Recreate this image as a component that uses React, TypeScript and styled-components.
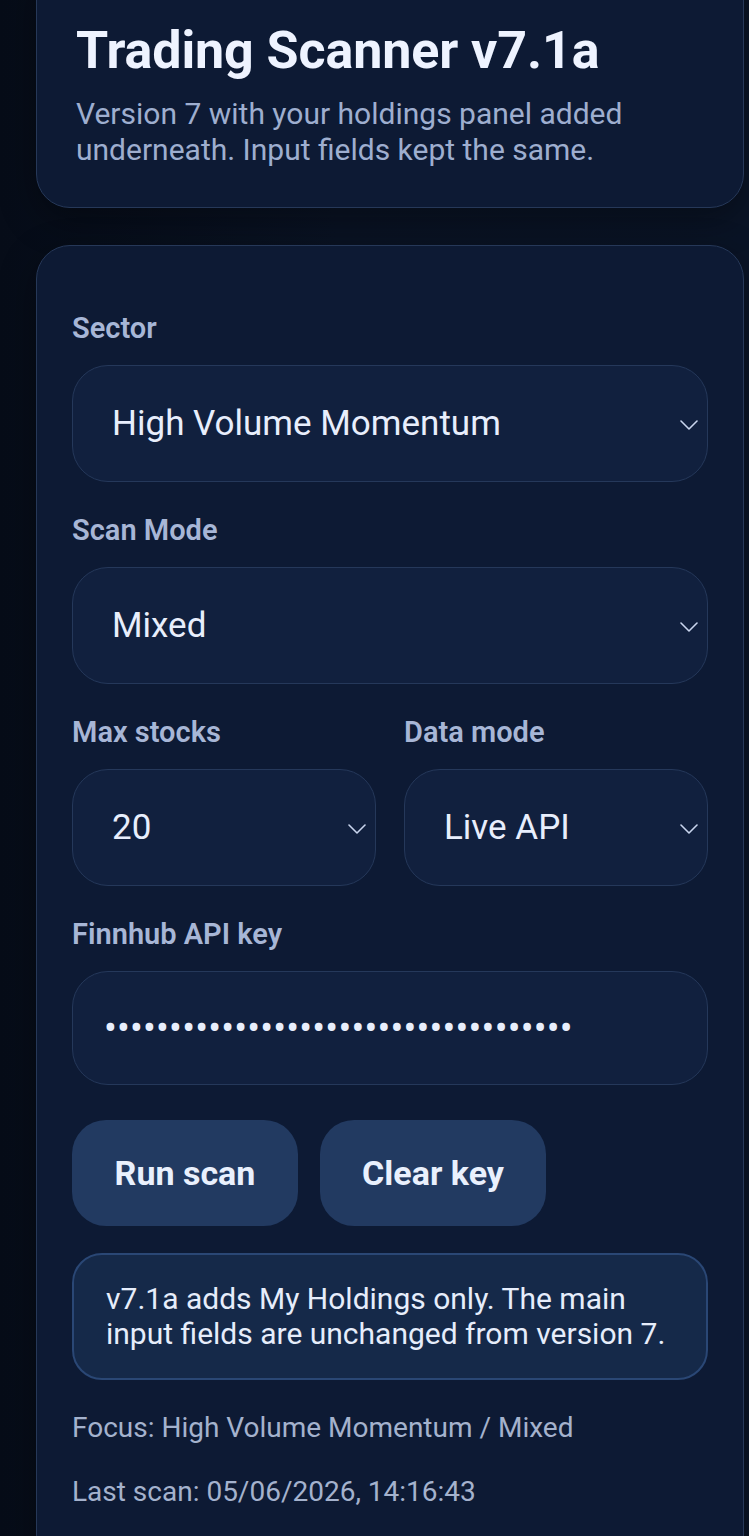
import React from 'react'
import styled, { createGlobalStyle } from 'styled-components'

const GlobalStyle = createGlobalStyle`
  html, body {
    margin: 0;
    padding: 0;
    background: #070e1b;
  }
  body {
    font-family: Roboto, "Noto Sans", "Liberation Sans", sans-serif;
    color: #e8eefc;
  }
  * {
    box-sizing: border-box;
  }
`

const Page = styled.div`
  min-height: 1536px;
  padding: 0 5px 0 36px;
  margin-top: -40px;
  background: linear-gradient(90deg, #060c18 0%, #0a1324 45%, #0a1426 100%);
  overflow: hidden;
`

const Card = styled.section<{ $top?: number; $pad: string }>`
  background: #0d1a34;
  border: 1px solid #263858;
  border-radius: 34px;
  padding: ${({ $pad }) => $pad};
  margin-top: ${({ $top }) => $top || 0}px;
  box-shadow: 0 12px 36px rgba(0, 0, 0, 0.35);
`

const Title = styled.h1`
  margin: 0;
  font-size: 52px;
  line-height: 60px;
  font-weight: 700;
  color: #eef3ff;
  letter-spacing: -0.1px;
`

const Subtitle = styled.p`
  margin: 15px 0 0;
  font-size: 30px;
  line-height: 36px;
  color: #9eaecf;
`

const Field = styled.div`
  margin-bottom: 32px;
`

const Label = styled.label`
  display: block;
  font-size: 29px;
  line-height: 32px;
  font-weight: 600;
  color: #a7b6d6;
  margin-bottom: 21px;
`

const SelectWrap = styled.div`
  position: relative;
`

const Select = styled.select`
  appearance: none;
  -webkit-appearance: none;
  width: 100%;
  height: 117px;
  padding: 0 40px 0 39px;
  background: #11203e;
  border: 1.5px solid #25385a;
  border-radius: 36px;
  font-family: inherit;
  font-size: 35px;
  color: #e8eefc;
  outline: none;
`

const Chevron = styled.svg`
  position: absolute;
  right: 10px;
  top: 50%;
  width: 18px;
  height: 10px;
  margin-top: -4px;
  pointer-events: none;
`

const Grid = styled.div`
  display: grid;
  grid-template-columns: 1fr 1fr;
  gap: 28px;
`

const KeyInput = styled.input`
  width: 100%;
  height: 114px;
  padding: 0 31px;
  background: #11203e;
  border: 1.5px solid #25385a;
  border-radius: 36px;
  font-family: Roboto, sans-serif;
  font-size: 38px;
  letter-spacing: 0.2px;
  color: #e8eefc;
  outline: none;
`

const Actions = styled.div`
  display: flex;
  gap: 22px;
  margin-top: 35px;
`

const Button = styled.button`
  width: 226px;
  height: 106px;
  border: none;
  border-radius: 34px;
  background: #223a61;
  font-family: inherit;
  font-size: 34px;
  font-weight: 700;
  color: #e9f0fd;
`

const Note = styled.div`
  margin-top: 27px;
  padding: 26px 30px 27px 32px;
  background: #152949;
  border: 2px solid #2a4775;
  border-radius: 30px;
  font-size: 30px;
  line-height: 35px;
  color: #e6edfb;
`

const Meta = styled.p`
  margin: 32px 0 0;
  font-size: 28px;
  line-height: 32px;
  color: #a4b2cd;
`

const SelectField = ({ label, value, options }: { label: string; value: string; options: string[] }) => (
  <Field>
    <Label>{label}</Label>
    <SelectWrap>
      <Select defaultValue={value}>
        {options.map((o) => (
          <option key={o}>{o}</option>
        ))}
      </Select>
      <Chevron viewBox="0 0 18 10" fill="none">
        <path d="M1 1l8 8 8-8" stroke="#c9d5ee" strokeWidth="1.6" strokeLinecap="round" strokeLinejoin="round" />
      </Chevron>
    </SelectWrap>
  </Field>
)

const App = () => {
  return (
    <Page>
      <GlobalStyle />
      <Card $pad="60px 40px 39px 39px">
        <Title>Trading Scanner v7.1a</Title>
        <Subtitle>
          Version 7 with your holdings panel added underneath. Input fields kept the same.
        </Subtitle>
      </Card>

      <Card $top={37} $pad="66px 35px 60px 35px">
        <SelectField
          label="Sector"
          value="High Volume Momentum"
          options={['High Volume Momentum', 'Technology', 'Energy', 'Healthcare']}
        />
        <SelectField label="Scan Mode" value="Mixed" options={['Mixed', 'Breakout', 'Reversal']} />
        <Grid>
          <SelectField label="Max stocks" value="20" options={['10', '20', '50']} />
          <SelectField label="Data mode" value="Live API" options={['Live API', 'Demo']} />
        </Grid>
        <Field>
          <Label>Finnhub API key</Label>
          <KeyInput type="password" readOnly value="abcdefghijklmnopqrstuvwxyz0123456789" />
        </Field>
        <Actions>
          <Button>Run scan</Button>
          <Button>Clear key</Button>
        </Actions>
        <Note>v7.1a adds My Holdings only. The main input fields are unchanged from version 7.</Note>
        <Meta>Focus: High Volume Momentum / Mixed</Meta>
        <Meta>Last scan: 05/06/2026, 14:16:43</Meta>
      </Card>
    </Page>
  )
}

export default App
